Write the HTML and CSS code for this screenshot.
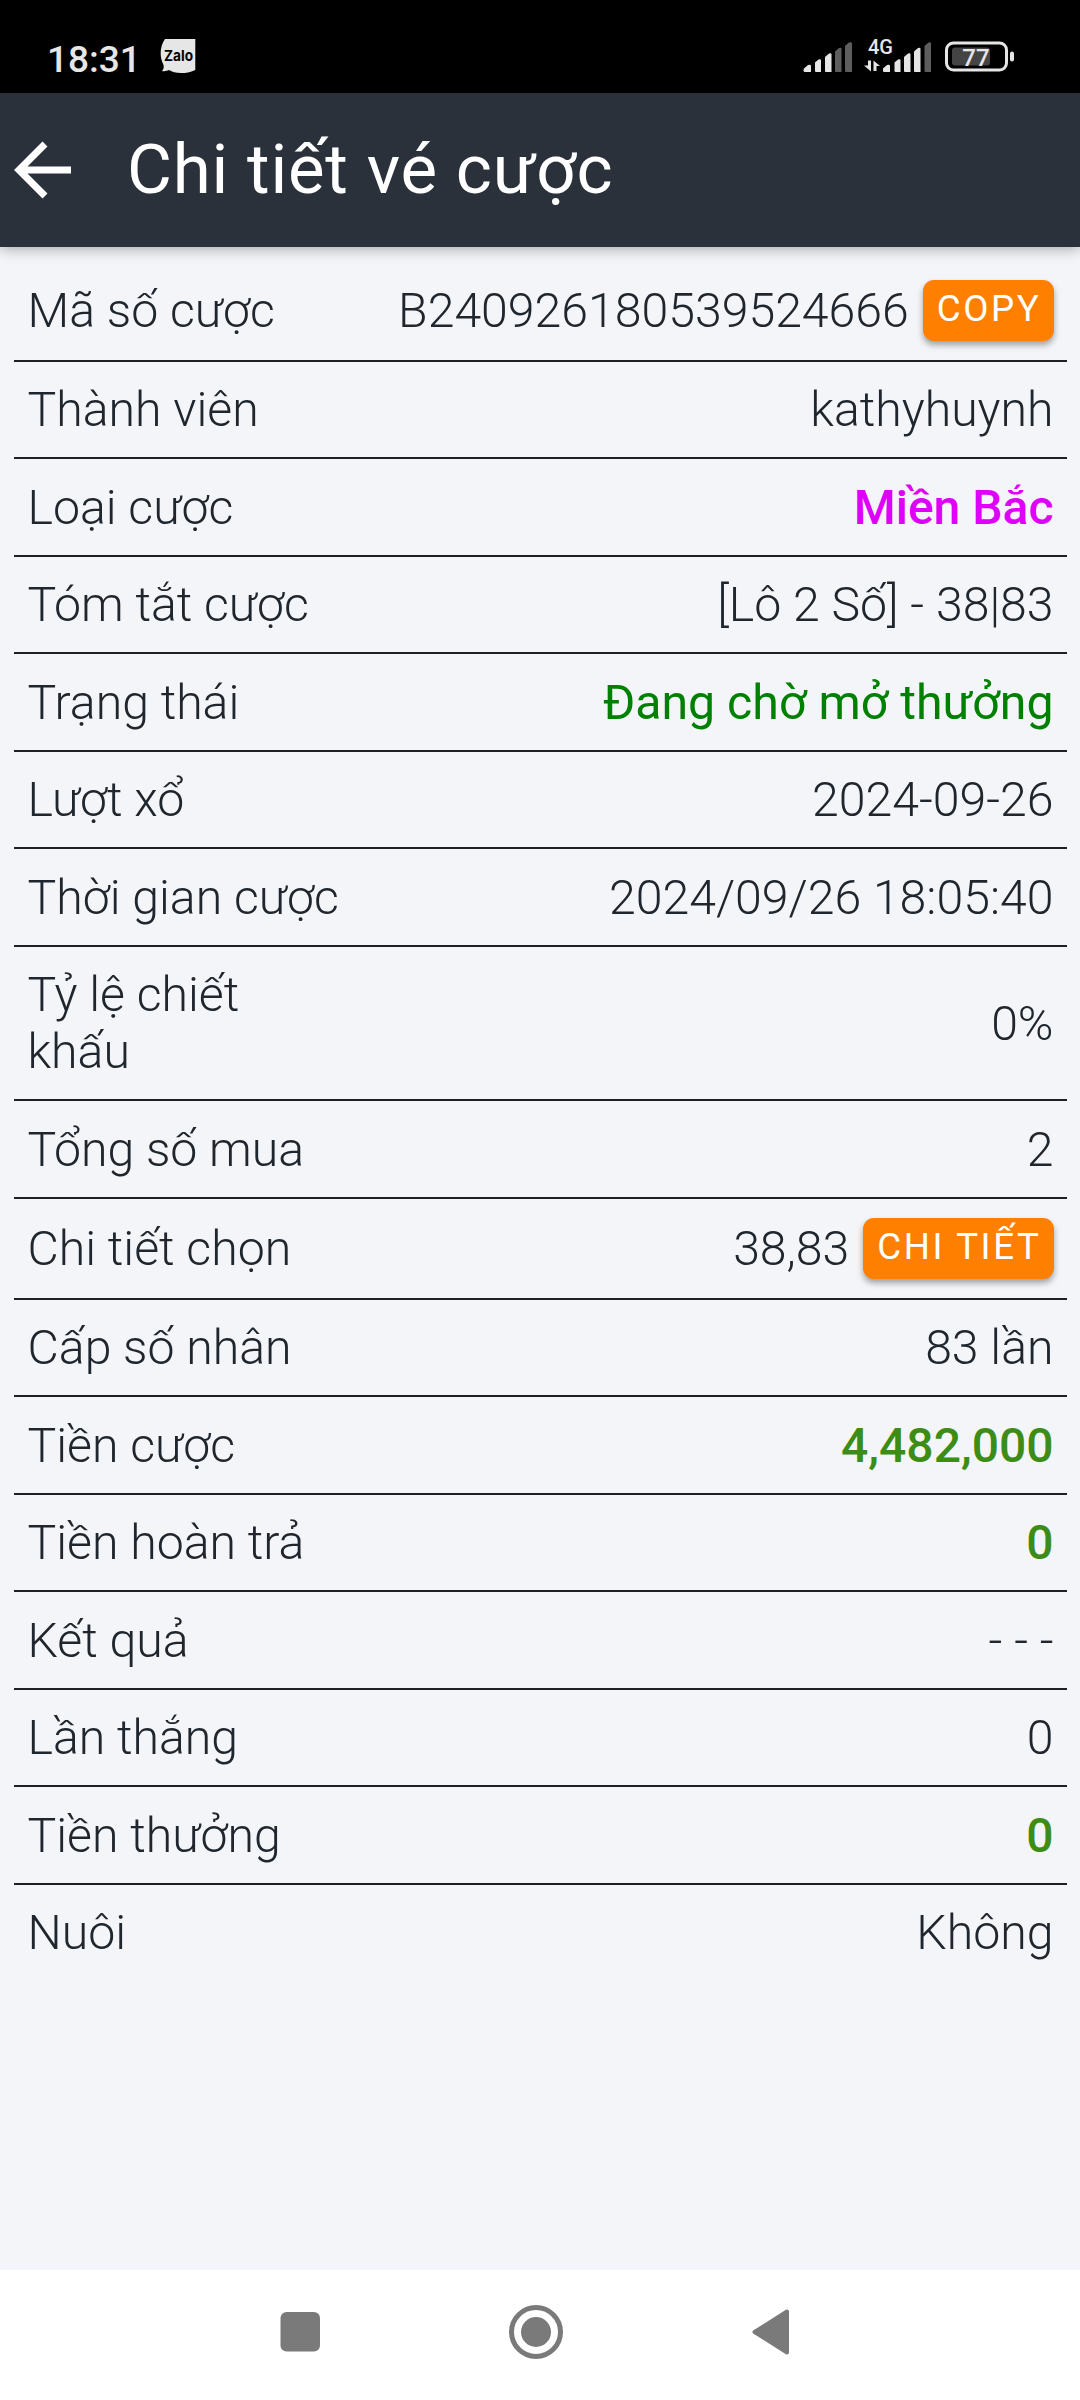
FILE: index.html
```html
<!DOCTYPE html>
<html lang="vi">
<head>
<meta charset="utf-8">
<title>Chi tiết vé cược</title>
<link rel="stylesheet" href="styles.css">
</head>
<body>
<div class="status">
  <span class="clock">18:31</span>
  <svg class="zalo" width="36" height="36" viewBox="0 0 36 36"><path fill="#e6e6e6" d="M5 0H35.3V31C30 33.500 26 34 21 34C16 34 12 33 9 31C7 32 4.500 32.500 2 32C3.500 30.500 4 28.500 3.500 26C-.5 18-.5 8 5 0Z"/><text x="18.500" y="21.500" text-anchor="middle" textLength="29" lengthAdjust="spacingAndGlyphs" class="zalo-text">Zalo</text></svg>
  <svg class="indicators" width="240" height="50" viewBox="0 -10 240 50">
    <g fill="#e6e6e6">
      <path d="M4 29.500l4-3.500q3-1 3 1v6h-6q-1.500 0-1.500-1.500z"/>
      <path d="M15 23.500l3.500-3q2.500-1 2.500 1V33h-5q-1 0-1-1z"/>
      <path d="M25 18l4-3.500q2.500-1 2.500 1V33h-5.500q-1 0-1-1z"/>
    </g>
    <g fill="#5e5e5e">
      <path d="M35 12.500l4-3.500q2.500-1 2.500 1V33h-5.500q-1 0-1-1z"/>
      <path d="M45 7l4-3.500q3-1 3 1V33h-6q-1 0-1-1z"/>
    </g>
    <text x="68" y="15" class="net">4G</text>
    <g fill="#e6e6e6">
      <path d="M68 21.500h3V32.500L64 26.500h4zM73.500 32V21.500L80 27h-3.500v5z"/>
      <path d="M83 29.500l4-3.500q3-1 3 1v6h-6q-1 0-1-1.500z"/>
      <path d="M94.500 23.500l3.500-3q2.500-1 2.500 1V33h-5q-1 0-1-1z"/>
      <path d="M104 18l4-3.500q2.500-1 2.500 1V33h-5.500q-1 0-1-1z"/>
      <path d="M114 12.500l4-3.500q2.500-1 2.500 1V33h-5.500q-1 0-1-1z"/>
    </g>
    <path fill="#5e5e5e" d="M124.500 7l4-3.500q2.500-1 2.500 1V33h-5.500q-1 0-1-1z"/>
    <rect x="146.500" y="4" width="60" height="27" rx="7" fill="none" stroke="#e6e6e6" stroke-width="3"/>
    <rect x="152" y="8.500" width="38" height="18" rx="3" fill="#444"/>
    <rect x="210" y="12.500" width="4" height="10" rx="2" fill="#e6e6e6"/>
    <text x="176" y="26.500" text-anchor="middle" class="level">77</text>
  </svg>
</div>
<header class="bar">
  <svg class="back" width="58" height="60" viewBox="0 0 58 60"><path fill="none" stroke="#fff" stroke-width="7" d="M57 30H5M31 4L5 30L31 56"/></svg>
  <h1 class="title">Chi tiết vé cược</h1>
</header>
<main class="list">
  <div class="row tall"><span class="label">Mã số cược</span><span class="value">B240926180539524666<button class="btn">COPY</button></span></div>
  <div class="row"><span class="label">Thành viên</span><span class="value">kathyhuynh</span></div>
  <div class="row"><span class="label">Loại cược</span><span class="value region">Miền Bắc</span></div>
  <div class="row"><span class="label">Tóm tắt cược</span><span class="value">[Lô 2 Số] - 38|83</span></div>
  <div class="row"><span class="label">Trạng thái</span><span class="value state">Đang chờ mở thưởng</span></div>
  <div class="row"><span class="label">Lượt xổ</span><span class="value">2024-09-26</span></div>
  <div class="row"><span class="label">Thời gian cược</span><span class="value">2024/09/26 18:05:40</span></div>
  <div class="row"><span class="label">Tỷ lệ chiết<br>khấu</span><span class="value">0%</span></div>
  <div class="row"><span class="label">Tổng số mua</span><span class="value">2</span></div>
  <div class="row tall"><span class="label">Chi tiết chọn</span><span class="value">38,83<button class="btn">CHI TIẾT</button></span></div>
  <div class="row"><span class="label">Cấp số nhân</span><span class="value">83 lần</span></div>
  <div class="row"><span class="label">Tiền cược</span><span class="value money">4,482,000</span></div>
  <div class="row"><span class="label">Tiền hoàn trả</span><span class="value money">0</span></div>
  <div class="row"><span class="label">Kết quả</span><span class="value">- - -</span></div>
  <div class="row"><span class="label">Lần thắng</span><span class="value">0</span></div>
  <div class="row"><span class="label">Tiền thưởng</span><span class="value money">0</span></div>
  <div class="row"><span class="label">Nuôi</span><span class="value">Không</span></div>
</main>
<nav class="nav">
  <svg width="1080" height="130" viewBox="0 0 1080 130" fill="#7a7a7a">
    <rect x="280.500" y="42" width="39.500" height="39.500" rx="6"/>
    <circle cx="536" cy="62" r="24.500" fill="none" stroke="#7a7a7a" stroke-width="5"/>
    <circle cx="536" cy="62" r="15"/>
    <path d="M754.500 62L787 41.500V82.500Z" stroke="#7a7a7a" stroke-width="4" stroke-linejoin="round"/>
  </svg>
</nav>
</body>
</html>
```
FILE: styles.css
```css
* { box-sizing: border-box; }
body {
  margin: 0;
  width: 1080px;
  height: 2400px;
  display: flex;
  flex-direction: column;
  overflow: hidden;
  background: #f3f5f9;
  color: #20262d;
  font-family: Roboto, sans-serif;
}
.status {
  height: 93px;
  flex: none;
  display: flex;
  align-items: flex-start;
  padding: 29px 40px 0 47px;
  background: #000;
  color: #e6e6e6;
}
.clock {
  width: 113px;
  margin-top: 11px;
  font-size: 37px;
  line-height: 40px;
  font-weight: 500;
}
.zalo { display: block; margin-top: 10px; }
.zalo-text { font: 700 15px Inter, sans-serif; fill: #000; }
.indicators { margin-left: auto; }
.net { font: 500 20px Roboto, sans-serif; fill: #e6e6e6; }
.level { font: 500 24px Roboto, sans-serif; fill: #e6e6e6; }
.bar {
  height: 154px;
  flex: none;
  display: flex;
  align-items: center;
  gap: 55px;
  padding-left: 14px;
  background: #2b313b;
  color: #fff;
  box-shadow: 0 1px 14px rgba(0, 0, 0, .36);
}
.title {
  margin: 0;
  font-size: 69px;
  line-height: 80px;
  font-weight: 400;
  letter-spacing: .8px;
}
.list { flex: 1; padding: 13.9px 13px 0 14px; }
.row {
  display: flex;
  align-items: center;
  justify-content: space-between;
  min-height: 97.5px;
  padding: 19.25px 13.5px 19.25px 13.5px;
  border-bottom: 2px solid #1f2026;
  font-size: 48.2px;
  line-height: 57px;
  font-weight: 300;
}
.row:last-child { border-bottom: 0; padding-bottom: 21.25px; }
.tall { height: 101px; padding-top: 0; padding-bottom: 0; }
.value { display: flex; align-items: center; white-space: pre; }
.region { color: #de00fa; font-weight: 500; font-size: 48px; }
.state { color: #008000; font-weight: 400; }
.money { color: #3d8c15; font-weight: 500; font-size: 48px; }
.btn {
  height: 61px;
  margin-left: 14px;
  padding: 0 12px 4px 14px;
  border: 0;
  border-radius: 11px;
  background: #ff7f00;
  color: #fff;
  font: 400 36.7px/57px Roboto, sans-serif;
  letter-spacing: 2.6px;
  box-shadow: 0 4px 6px rgba(0, 0, 0, .35);
}
.nav { height: 130px; flex: none; background: #fff; }
.nav svg { display: block; }
```
